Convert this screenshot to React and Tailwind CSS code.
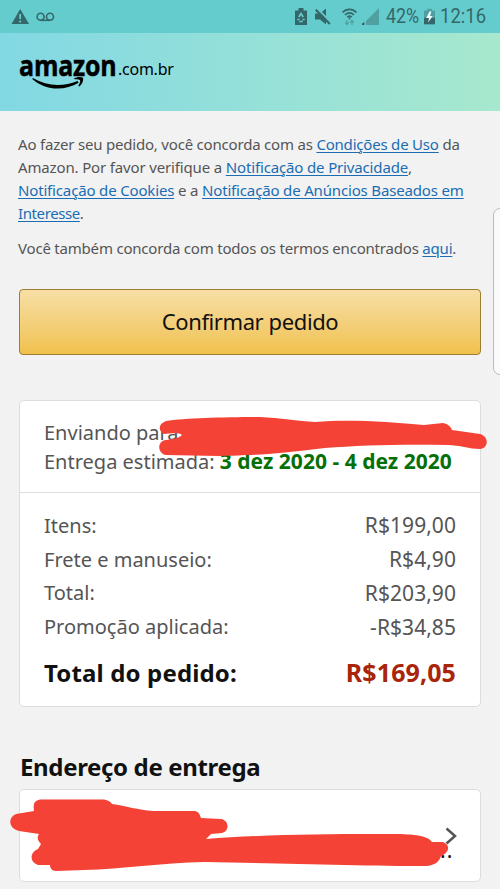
import React from "react";

const link = "text-[#1a6db3] underline decoration-1 underline-offset-[1.500px]";

function StatusBar() {
  return (
    <div className="flex h-[33px] items-center bg-[#65cccd] font-[Roboto,sans-serif] text-[#34676a]">
      <svg className="ml-[11px] h-[17px] w-[19px]" viewBox="0 0 19 17">
        <path d="M9.2 1 L18 16 H.5 Z" fill="#34676a" />
        <path d="M9.2 6v5M9.2 12.5v2" stroke="#65cccd" strokeWidth="1.8" />
      </svg>
      <svg className="ml-[6px] h-[10px] w-[19px]" viewBox="0 0 19 10" fill="none" stroke="#34676a" strokeWidth="1.6">
        <circle cx="4.6" cy="4.8" r="3.5" />
        <circle cx="14" cy="4.8" r="3.5" />
        <path d="M4.6 8.3H14" />
      </svg>
      <svg className="ml-[240px] h-[18px] w-[12px]" viewBox="0 0 12 18">
        <path d="M3.5 0h5v2.5H12V17H0V2.5h3.5Z" fill="#34676a" />
        <path d="M3.8 9 6 5.500 8.200 9M2.300 11.500h2.200M7.500 11.500h2.200M4.200 13.500h3.600" fill="none" stroke="#65cccd" strokeWidth="1.700" />
      </svg>
      <svg className="ml-[8px] h-[18px] w-[16px]" viewBox="0 0 16 18">
        <path d="M0 5.500h5l6-5v16l-6-5H0Z" fill="#34676a" />
        <path d="M2.500 .6 16 14.500" stroke="#65cccd" strokeWidth="1.800" />
        <path d="M.8 1.800 14.800 16" stroke="#34676a" strokeWidth="2.200" />
      </svg>
      <svg className="ml-[11px] h-[18px] w-[15px]" viewBox="0 0 15 18" fill="none" stroke="#34676a" strokeWidth="1.700">
        <path d="M.5 4.500c4-4.300 10-4.300 14 0M3 7c2.800-2.700 6.200-2.700 9 0M5.300 9.200c1.400-1.200 3-1.200 4.400 0" />
        <circle cx="7.500" cy="10.500" r="1" fill="#34676a" stroke="none" />
        <path d="M5 12v4M3.300 14.500 5 16.500l1.700-2M10 17v-4M8.300 14.500l1.700-2 1.700 2" stroke="#509fa1" strokeWidth="1.200" />
      </svg>
      <svg className="ml-[5px] h-[17px] w-[17px]" viewBox="0 0 17 17">
        <path d="M17 0V17H4V13Z" fill="#509fa1" />
        <path d="M0 17v-1.500L2.500 14V17Z" fill="#34676a" />
      </svg>
      <span className="ml-[7px] w-[38px] origin-left scale-x-[0.85] whitespace-nowrap text-[21px] leading-none">42%</span>
      <svg className="h-[18px] w-[11px]" viewBox="0 0 12 18">
        <path d="M3.500 0h5v2H12V10H0V2h3.500Z" fill="#509fa1" />
        <path d="M0 10h12v7H0Z" fill="#34676a" />
        <path d="M6 3 2.500 10h3L4.500 15 9.500 8H6.500L8 3Z" fill="#f4ffff" />
      </svg>
      <span className="ml-[5px] origin-left scale-x-[0.88] whitespace-nowrap text-[21px] leading-none">12:16</span>
    </div>
  );
}

function Row({ label, value }) {
  return (
    <div className="flex h-[33.800px] items-center justify-between whitespace-nowrap">
      <span>{label}</span>
      <span className="text-[21px] tracking-[0.050px]">{value}</span>
    </div>
  );
}

export default function App() {
  return (
    <div className="relative h-[889px] w-[500px] overflow-hidden bg-[#f2f2f2] font-['Noto_Sans','Open_Sans',sans-serif] text-[#555]">
      <StatusBar />
      <header className="flex h-[78px] items-start bg-linear-to-r from-[#82d8e3] to-[#a7e8ce] pl-[19px] pt-[19px] text-black">
        <div className="flex w-[99px] flex-col">
          <span className="h-[26px] w-[98px] origin-left scale-x-[0.860] whitespace-nowrap font-['Open_Sans',sans-serif] text-[29px] font-bold leading-[25px] tracking-[-0.200px] [-webkit-text-stroke:0.500px_black]">amazon</span>
          <svg className="-mt-px ml-[13px] h-[13px] w-[53px]" viewBox="0 0 53 13">
            <path d="M.8 1C15 9.500 31 10 45.500 4l1.200 1.800C32 14.500 13 13.500 .3 2Z" />
            <path d="M41.500 1.800C45 -.3 49 -.2 51 .8c.6 3-.8 6.500-3.800 8.700l-.9-.7C47.700 6.500 48.500 4.500 48 3 46 2.300 43.500 2.600 41.500 1.800Z" />
          </svg>
        </div>
        <span className="h-[26px] whitespace-nowrap text-[16px] leading-[34px] tracking-[-0.250px]">.com.br</span>
      </header>

      <main className="px-[19px] pt-[22px]">
        <div className="-ml-px whitespace-nowrap text-[15px] leading-[23px]">
          <p className="tracking-[-0.200px]">Ao fazer seu pedido, você concorda com as <a className={link}>Condições de Uso</a> da</p>
          <p className="tracking-[-0.150px]">Amazon. Por favor verifique a <a className={link}>Notificação de Privacidade</a>,</p>
          <p className="tracking-[-0.160px]"><a className={link}>Notificação de Cookies</a> e a <a className={link}>Notificação de Anúncios Baseados em</a></p>
          <p className="tracking-[-0.400px]"><a className={link}>Interesse</a>.</p>
          <p className="mt-[12px] tracking-[-0.200px]">Você também concorda com todos os termos encontrados <a className={link}>aqui</a>.</p>
        </div>

        <button className="mt-[29px] flex h-[66px] w-[462px] items-center justify-center rounded-[4px] border border-[#9c7e31] bg-linear-to-b from-[#f7dfa5] to-[#f0c14b] pb-[2px] text-[22px] tracking-[-0.400px] text-[#111]">
          <span>Confirmar pedido</span>
        </button>

        <section className="mt-[45px] h-[307px] w-[462px] rounded-[5px] border border-[#ddd] bg-white text-[20px]">
          <div className="flex h-[92px] flex-col whitespace-nowrap border-b border-[#ddd] pl-[24px] pt-[18px] leading-[28px]">
            <p>Enviando para</p>
            <p>Entrega estimada: <b className="text-[21px] tracking-[0.020px] text-[#067006]">3 dez 2020 - 4 dez 2020</b></p>
          </div>
          <div className="px-[24px] pt-[16px]">
            <Row label="Itens:" value="R$199,00" />
            <Row label="Frete e manuseio:" value="R$4,90" />
            <Row label="Total:" value="R$203,90" />
            <Row label="Promoção aplicada:" value="-R$34,85" />
            <div className="mt-[12px] flex h-[34px] items-center justify-between whitespace-nowrap text-[24px] font-bold">
              <span className="tracking-[0.150px] text-[#111]">Total do pedido:</span>
              <span className="text-[25px] tracking-[0.100px] text-[#a92409]">R$169,05</span>
            </div>
          </div>
        </section>

        <h2 className="mt-[44px] h-[33px] whitespace-nowrap pl-px text-[24px] font-bold leading-[32px] tracking-[-0.350px] text-[#111]">Endereço de entrega</h2>
        <section className="mt-[5px] flex h-[93px] w-[462px] items-center justify-end rounded-[5px] border border-[#ddd] bg-white pr-[21px]">
          <div className="relative flex h-[30px] w-[14px] items-center">
            <svg className="h-[18px] w-[12px]" viewBox="0 0 12 18" fill="none" stroke="#555" strokeWidth="2.500">
              <path d="M1.500 1.500 10 9 1.500 16.500" />
            </svg>
            <span className="absolute -left-[5px] top-[15px] text-[21px] leading-[28px] tracking-[1.200px] text-[#111]">..</span>
          </div>
        </section>
      </main>

      <div className="absolute -right-[12px] top-[208px] h-[167px] w-[19px] rounded-[7px] border border-[#bbb] bg-[#fafafa]" />
      <svg className="absolute left-0 top-0 h-[889px] w-[500px]" viewBox="0 0 500 889" fill="#f44336">
        <path d="M166 421 C185 418 225 417 260 417 C280 418 298 421 315 422 C350 419 390 422 424 425 L443 423 C448 424 451 427 452 430 L480 434 C490 437 488 449 480 449 C470 449 459 445 448 445 C405 444 360 445 325 448 C290 452 265 455 245 455 C220 457 190 455 166 455 C157 453 157 441 166 440 C172 439 178 439 182 435 C178 432 170 434 164 434 C158 431 158 424 166 421Z" />
        <path d="M40 799.500 H104 C108 800 111 802 112 804 C126 806 138 810 153 811 H195 C199 812 200 815 201 818 L221 819 C229 820 230 831 222 833 L211 834 L206 839 C255 835 318 834 373 834 C403 834 426 833 432 842 L443 842 C451 845 449 853 441 856 C439 862 435 865 427 866 C363 866 277 863 205 862 C160 863 123 869 84 870 L56 871 C52 871 50 868 50 865 L38 865 C29 862 30 852 38 849 L41 844 C37 840 37 837 39 834 L19 831 C9 829 7 818 16 814 L34 811 C33 804 34 801 40 799.500Z" />
      </svg>
    </div>
  );
}
